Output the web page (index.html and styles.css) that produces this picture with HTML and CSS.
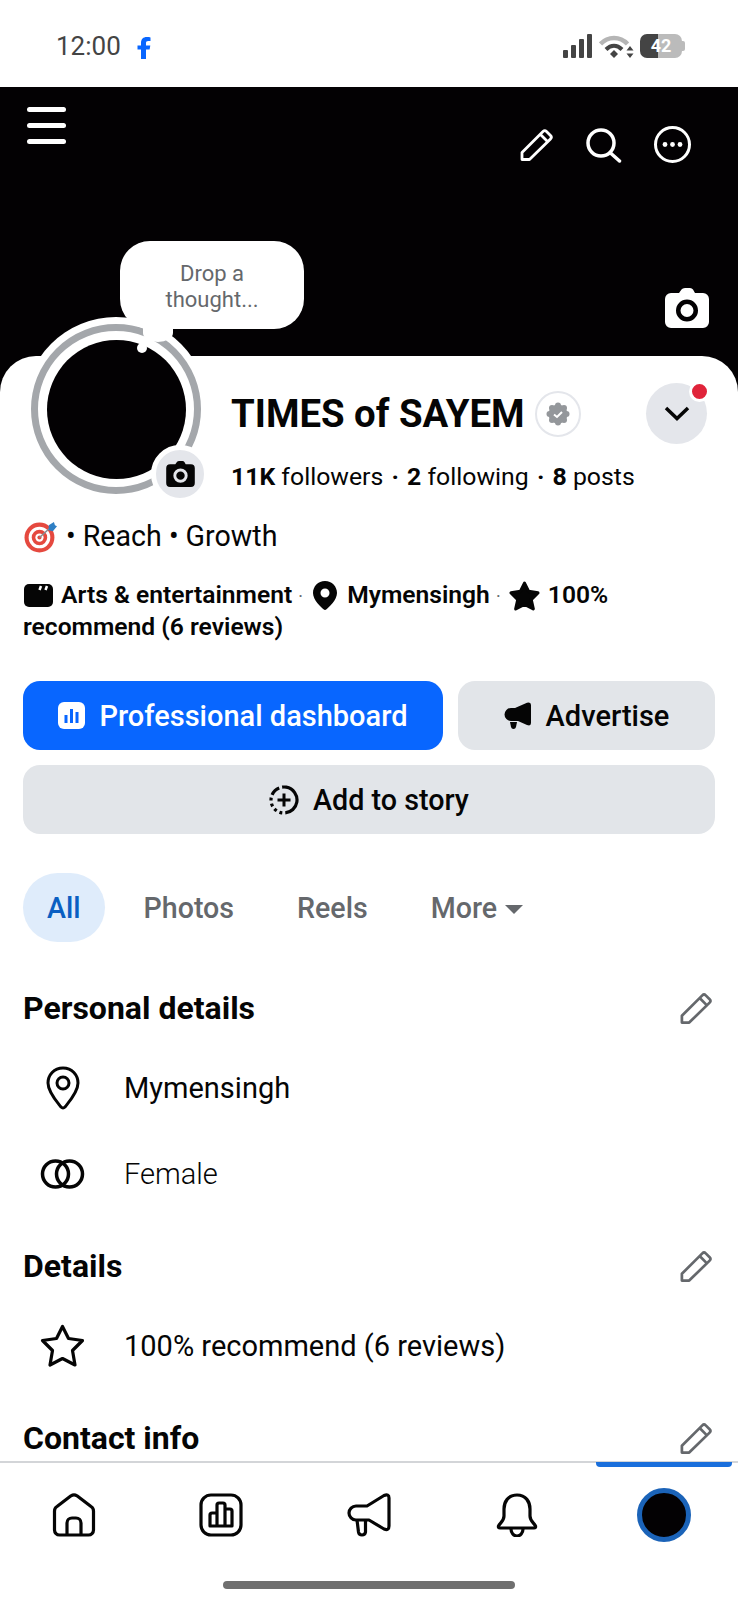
FILE: index.html
```html
<!DOCTYPE html>
<html lang="en">
    <head>
        <meta charset="UTF-8">
        <meta name="viewport" content="width=device-width, initial-scale=1.0">
        <title>TIMES of SAYEM</title>
        <link rel="stylesheet" href="styles.css">
    </head>
    <body>

    <svg class="defs" width="0" height="0">
        <symbol id="pencil" viewBox="0 0 37 37">
            <path d="M4 33.5V26.5L25 5.500a2.500 2.500 0 0 1 3.500 0l4 4a2.500 2.500 0 0 1 0 3.500L11.500 33.500zM22.500 8.500l6.500 6.500" fill="none" stroke="currentColor" stroke-width="2.800" stroke-linejoin="round"/>
        </symbol>
        <symbol id="camera" viewBox="0 0 44 40">
            <path fill="currentColor" fill-rule="evenodd" d="M14 5L16.500 1.500Q17.500 0 20 0H25Q27 0 28 1.500L30 5H38a6 6 0 0 1 6 6V34a6 6 0 0 1-6 6H6a6 6 0 0 1-6-6V11a6 6 0 0 1 6-6zM22 11.500a11 11 0 1 0 0 22a11 11 0 1 0 0-22zM22 16a6.500 6.500 0 1 1 0 13a6.500 6.500 0 1 1 0-13z"/>
        </symbol>
    </svg>

    <div class="page">
        <div class="status">
            <span class="clock">12:00</span>
            <svg class="status-fb" viewBox="0 0 14 22"><path fill="#0866ff" d="M4 22V12.500H0.500V8.500H4V6C4 2 6.300 0 9.700 0C11.200 0 12.800 0.200 13.500 0.400V4H11.300C9.500 4 9 4.900 9 6.200V8.500H13.300L12.600 12.500H9V22z"/></svg>
            <div class="status-right">
                <svg class="signal" viewBox="0 0 30 24">
                    <rect x="0" y="16" width="5" height="8" rx="1" fill="#444"/>
                    <rect x="8" y="11" width="5" height="13" rx="1" fill="#444"/>
                    <rect x="16" y="5" width="5" height="19" rx="1" fill="#444"/>
                    <rect x="24" y="0" width="5" height="24" rx="1" fill="#444"/>
                </svg>
                <svg class="wifi" viewBox="0 0 35 24">
                    <path d="M1.500 10C9 2 21 2 28.500 10" fill="none" stroke="#b5b5b5" stroke-width="4.500"/>
                    <path d="M7 15.500C12 10.500 18 10.500 23 15.500" fill="none" stroke="#444" stroke-width="4"/>
                    <path d="M11 20L15 16L19 20L15 24z" fill="#444"/>
                    <path d="M31 12l3.500 4.500h-7zM31 24l3.500-4.500h-7z" fill="#444"/>
                </svg>
                <div class="battery"><span>42</span></div>
            </div>
        </div>

        <div class="cover">
            <div class="cover-top">
                <div class="burger"><span></span><span></span><span></span></div>
                <div class="cover-actions">
                    <svg class="icon-37"><use href="#pencil"/></svg>
                    <svg class="icon-37" viewBox="0 0 37 37"><circle cx="15" cy="17" r="13" fill="none" stroke="currentColor" stroke-width="3.500"/><path d="M24.500 27L33.500 35" stroke="currentColor" stroke-width="3.500" stroke-linecap="round"/></svg>
                    <svg class="icon-37" viewBox="0 0 37 37"><circle cx="18.500" cy="18.500" r="17" fill="none" stroke="currentColor" stroke-width="3"/><circle cx="11" cy="18.500" r="2.400" fill="currentColor"/><circle cx="18.500" cy="18.500" r="2.400" fill="currentColor"/><circle cx="26" cy="18.500" r="2.400" fill="currentColor"/></svg>
                </div>
            </div>
            <svg class="cover-camera"><use href="#camera"/></svg>
        </div>

        <div class="card">
            <div class="bubble">Drop a<br>thought...</div>
            <div class="avatar">
                <div class="avatar-ring"><div class="avatar-photo"></div></div>
                <div class="avatar-badge"><svg class="badge-camera"><use href="#camera"/></svg></div>
            </div>

            <div class="head">
                <div class="head-top">
                    <h1 class="name">TIMES of SAYEM</h1>
                    <div class="verified">
                        <svg viewBox="0 0 24 24" width="24" height="24">
                            <g fill="#94979b">
                                <circle cx="12" cy="12" r="9.500"/>
                                <circle cx="12" cy="3.500" r="3"/><circle cx="18" cy="6" r="3"/><circle cx="20.500" cy="12" r="3"/><circle cx="18" cy="18" r="3"/>
                                <circle cx="12" cy="20.500" r="3"/><circle cx="6" cy="18" r="3"/><circle cx="3.500" cy="12" r="3"/><circle cx="6" cy="6" r="3"/>
                            </g>
                            <path d="M8 12.500l3 2.500l5-5" fill="none" stroke="#fff" stroke-width="2"/>
                        </svg>
                    </div>
                    <button class="drop-btn">
                        <svg viewBox="0 0 26 15" width="26" height="15"><path d="M2 2L13 12.500L24 2" fill="none" stroke="#050505" stroke-width="3.500"/></svg>
                        <span class="red-dot"></span>
                    </button>
                </div>
                <p class="counts"><b>11K</b> followers <b class="sep">·</b> <b>2</b> following <b class="sep">·</b> <b>8</b> posts</p>
            </div>

            <p class="bio">
                <svg class="target" viewBox="0 0 32 32">
                    <circle cx="15" cy="17" r="14.500" fill="#e5493f"/>
                    <circle cx="15" cy="17" r="10.500" fill="#fff"/>
                    <circle cx="15" cy="17" r="7.500" fill="#e5493f"/>
                    <circle cx="15" cy="17" r="4" fill="#fff"/>
                    <circle cx="15" cy="17" r="2" fill="#e5493f"/>
                    <path d="M15 17L26 7" stroke="#8a8d91" stroke-width="1.500"/>
                    <path d="M24 5l5-3l1 3l2 1l-4 5l-4-1z" fill="#2f7fc4"/>
                </svg>
                • Reach • Growth
            </p>

            <p class="meta">
                <svg class="meta-clip" viewBox="0 0 29 23"><rect width="29" height="23" rx="5" fill="#050505"/><path d="M17 2L15.500 6M23 2L21.500 6" stroke="#fff" stroke-width="2.500"/></svg>
                Arts &amp; entertainment <span class="dot">·</span>
                <svg class="meta-pin" viewBox="0 0 24 29"><path fill="#050505" fill-rule="evenodd" d="M12 0C5 0 0 5.500 0 12C0 19 8 26 10.500 28.300Q12 29.500 13.500 28.300C16 26 24 19 24 12C24 5.500 19 0 12 0zM12 7.500a4.500 4.500 0 1 1 0 9a4.500 4.500 0 1 1 0-9z"/></svg>
                Mymensingh <span class="dot">·</span>
                <svg class="meta-star" viewBox="0 0 30 29"><path fill="#050505" stroke="#050505" stroke-width="3" stroke-linejoin="round" d="M15 2L19 10L28 11.500L21.500 18L23.500 27L15 22.500L6.500 27L8.500 18L2 11.500L11 10z"/></svg>
                100%<br>recommend (6 reviews)
            </p>

            <div class="actions">
                <button class="btn btn-blue">
                    <svg class="btn-icon-dash" viewBox="0 0 27 27"><rect width="27" height="27" rx="6" fill="#fff"/><rect x="6.500" y="13" width="3" height="8" fill="#0866ff"/><rect x="12" y="7" width="3" height="14" fill="#0866ff"/><rect x="17.500" y="10" width="3" height="11" fill="#0866ff"/></svg>
                    Professional dashboard
                </button>
                <button class="btn btn-grey btn-side">
                    <svg class="btn-icon-horn" viewBox="0 0 28 27"><path fill="#050505" d="M7 6H11L23 0.800Q27 -0.500 27 3V21Q27 24.500 23 23L14 19H7A6.500 6.500 0 0 1 7 6zM6 20H13L12 25Q11.500 27 9.500 27T7 25z"/></svg>
                    Advertise
                </button>
                <button class="btn btn-grey btn-wide">
                    <svg class="btn-icon-add" viewBox="0 0 30 30"><circle cx="15" cy="15" r="13" fill="none" stroke="#050505" stroke-width="3.200" stroke-dasharray="37 3 3 3 3 3 3 3 3 3 10 3" transform="rotate(-80 15 15)"/><path d="M15 8.500V21.500M8.500 15H21.500" stroke="#050505" stroke-width="3"/></svg>
                    Add to story
                </button>
            </div>

            <div class="tabs">
                <div class="tab tab-on">All</div>
                <div class="tab">Photos</div>
                <div class="tab">Reels</div>
                <div class="tab">More<span class="caret"></span></div>
            </div>

            <div class="section">
                <div class="section-head">
                    <h2>Personal details</h2>
                    <svg class="edit"><use href="#pencil"/></svg>
                </div>
                <div class="rows">
                    <div class="row">
                        <div class="row-icon"><svg width="34" height="44" viewBox="0 0 34 44"><path d="M17 2C8 2 2 9 2 17C2 26 11 36 15 41Q17 43 19 41C23 36 32 26 32 17C32 9 26 2 17 2z" fill="none" stroke="#050505" stroke-width="3"/><circle cx="17" cy="17" r="6" fill="none" stroke="#050505" stroke-width="3"/></svg></div>
                        <span>Mymensingh</span>
                    </div>
                    <div class="row row-light">
                        <div class="row-icon"><svg width="45" height="30" viewBox="0 0 45 30"><circle cx="15.500" cy="15" r="13" fill="none" stroke="#050505" stroke-width="3.500"/><circle cx="29.500" cy="15" r="13" fill="none" stroke="#050505" stroke-width="3.500"/></svg></div>
                        <span>Female</span>
                    </div>
                </div>
            </div>

            <div class="section">
                <div class="section-head">
                    <h2>Details</h2>
                    <svg class="edit"><use href="#pencil"/></svg>
                </div>
                <div class="rows">
                    <div class="row">
                        <div class="row-icon"><svg width="45" height="44" viewBox="0 0 45 44"><path d="M22.500 2.500L28.500 14.500L42.500 16.500L32.500 26.500L35 41L22.500 34.500L10 41L12.500 26.500L2.500 16.500L16.500 14.500z" fill="none" stroke="#050505" stroke-width="3.200" stroke-linejoin="round"/></svg></div>
                        <span>100% recommend (6 reviews)</span>
                    </div>
                </div>
            </div>

            <div class="section">
                <div class="section-head">
                    <h2>Contact info</h2>
                    <svg class="edit"><use href="#pencil"/></svg>
                </div>
            </div>
        </div>

        <div class="nav">
            <div class="nav-tabs">
                <div class="nav-tab"><svg width="44" height="44" viewBox="0 0 44 44"><g fill="none" stroke="#050505" stroke-width="3.200" stroke-linejoin="round"><path d="M2.500 18Q2.500 15 5 13.500L19 2.800Q22 1 25 2.800L39 13.500Q41.500 15 41.500 18V37a5 5 0 0 1-5 5H7.500a5 5 0 0 1-5-5z"/><path d="M15 42V30a5 5 0 0 1 5-5h4a5 5 0 0 1 5 5V42"/></g></svg></div>
                <div class="nav-tab"><svg width="44" height="44" viewBox="0 0 44 44"><g fill="none" stroke="#050505" stroke-width="3.200" stroke-linejoin="round"><rect x="2" y="2" width="40" height="40" rx="10"/><path d="M11 33V22a2 2 0 0 1 2-2h5V12a2 2 0 0 1 2-2h4a2 2 0 0 1 2 2V16h5a2 2 0 0 1 2 2V33zM18 20V33M26 16V33"/></g></svg></div>
                <div class="nav-tab"><svg width="46" height="44" viewBox="0 0 46 44"><g fill="none" stroke="#050505" stroke-width="3.200" stroke-linejoin="round"><path d="M10 13H21L38 2.500Q43 0.500 43 5V33Q43 38 38 36L23 27H10A7 7 0 0 1 10 13z"/><path d="M11 27l1.500 12q0.500 3 3.500 3t3.500-3V28"/></g></svg></div>
                <div class="nav-tab"><svg width="42" height="44" viewBox="0 0 42 44"><g fill="none" stroke="#050505" stroke-width="3.200" stroke-linejoin="round"><path d="M21 2C12 2 8 9 8 16V23C8 28 4 30 2.500 33Q2 35 4 35H38Q40 35 39.500 33C38 30 34 28 34 23V16C34 9 30 2 21 2z"/><path d="M15 36a6 7 0 0 0 12 0"/></g></svg></div>
                <div class="nav-tab nav-tab-on"><div class="nav-avatar"></div></div>
            </div>
            <div class="home-bar"></div>
        </div>
    </div>

    </body>
</html>
```

FILE: styles.css
```css
* {
    box-sizing: border-box;
    margin: 0;
    padding: 0;
}
body {
    background-color: #fff;
    color: #050505;
    font-family: Roboto, "Liberation Sans", sans-serif;
}
.defs {
    position: absolute;
}
.page {
    display: flex;
    flex-direction: column;
    width: 738px;
    height: 1600px;
    overflow: hidden;
}

/* status bar */
.status {
    display: flex;
    align-items: center;
    flex-shrink: 0;
    height: 87px;
    padding: 10px 53px 6px 56px;
}
.clock {
    font-size: 26px;
    color: #444;
}
.status-fb {
    width: 14px;
    height: 22px;
    margin-left: 16px;
    margin-top: 4px;
}
.status-right {
    display: flex;
    align-items: center;
    gap: 6px;
    margin-left: auto;
}
.signal {
    width: 30px;
    height: 24px;
}
.wifi {
    width: 35px;
    height: 24px;
}
.battery {
    position: relative;
    width: 42px;
    height: 24px;
    margin-right: 3px;
    border-radius: 7px;
    background: linear-gradient(90deg, #444 44%, #bbb 44%);
    color: #fff;
    font-size: 18px;
    font-weight: 700;
    line-height: 24px;
    text-align: center;
}
.battery::after {
    content: "";
    position: absolute;
    top: 7px;
    right: -3px;
    width: 3px;
    height: 10px;
    border-radius: 0 2px 2px 0;
    background-color: #bbb;
}

/* cover */
.cover {
    display: flex;
    flex-direction: column;
    flex-shrink: 0;
    height: 309px;
    padding: 20px 27px 0;
    background-color: #030103;
    color: #fff;
}
.cover-top {
    display: flex;
    justify-content: space-between;
}
.burger {
    display: flex;
    flex-direction: column;
    gap: 11px;
}
.burger span {
    width: 39px;
    height: 5px;
    border-radius: 3px;
    background-color: #fff;
}
.cover-actions {
    display: flex;
    gap: 31px;
    margin-top: 19px;
    margin-right: 20px;
}
.icon-37 {
    width: 37px;
    height: 37px;
}
.cover-camera {
    width: 44px;
    height: 40px;
    margin-top: 125px;
    margin-left: auto;
    margin-right: 2px;
}

/* main card */
.card {
    position: relative;
    flex: 1;
    min-height: 0;
    margin-top: -40px;
    padding: 0 23px;
    border-radius: 36px 36px 0 0;
    background-color: #fff;
}
.bubble {
    position: absolute;
    z-index: 3;
    top: -115px;
    left: 120px;
    width: 184px;
    height: 88px;
    padding-top: 20px;
    border-radius: 30px;
    background-color: #fff;
    color: #65686c;
    font-size: 22px;
    line-height: 26px;
    text-align: center;
}
.bubble::before {
    content: "";
    position: absolute;
    left: 23px;
    bottom: -13px;
    width: 30px;
    height: 18px;
    border-radius: 0 0 50% 50%;
    background-color: #fff;
}
.bubble::after {
    content: "";
    position: absolute;
    left: 17px;
    top: 102px;
    width: 10px;
    height: 10px;
    border-radius: 50%;
    background-color: #fff;
}
.avatar {
    position: absolute;
    z-index: 2;
    top: -39px;
    left: 24px;
    display: flex;
    align-items: center;
    justify-content: center;
    width: 184px;
    height: 184px;
    border-radius: 50%;
    background-color: #fff;
}
.avatar-ring {
    display: flex;
    align-items: center;
    justify-content: center;
    width: 170px;
    height: 170px;
    border: 7px solid #a4a7ab;
    border-radius: 50%;
}
.avatar-photo {
    width: 139px;
    height: 139px;
    border-radius: 50%;
    background-color: #030103;
}
.avatar-badge {
    position: absolute;
    left: 127px;
    top: 128px;
    display: flex;
    align-items: center;
    justify-content: center;
    width: 58px;
    height: 58px;
    border: 5px solid #fff;
    border-radius: 50%;
    background-color: #e4e6eb;
    color: #050505;
}
.badge-camera {
    width: 29px;
    height: 26px;
}

/* name block */
.head {
    padding-top: 27px;
    padding-left: 208px;
}
.head-top {
    display: flex;
    align-items: center;
    height: 61px;
}
.name {
    font-size: 38.3px;
    font-weight: 700;
    line-height: 46px;
    white-space: nowrap;
}
.verified {
    display: flex;
    align-items: center;
    justify-content: center;
    width: 46px;
    height: 46px;
    margin-left: 10px;
    border: 2px solid #e4e6eb;
    border-radius: 50%;
}
.drop-btn {
    position: relative;
    display: flex;
    align-items: center;
    justify-content: center;
    width: 61px;
    height: 61px;
    margin-left: auto;
    margin-right: 8px;
    border-width: 0;
    border-radius: 50%;
    background-color: #e4e6eb;
}
.red-dot {
    position: absolute;
    top: -2px;
    right: -3px;
    width: 21px;
    height: 21px;
    border: 3px solid #fff;
    border-radius: 50%;
    background-color: #e0243a;
}
.counts {
    margin-top: 18px;
    font-size: 24.8px;
    line-height: 30px;
    white-space: nowrap;
}
.sep {
    margin: 0 2px;
}
.bio {
    display: flex;
    align-items: center;
    gap: 9px;
    height: 36px;
    margin-top: 26px;
    font-size: 28.6px;
}
.target {
    width: 33px;
    height: 33px;
    margin-left: 1px;
}
.meta {
    margin-top: 26px;
    font-size: 24.6px;
    font-weight: 600;
    line-height: 30px;
}
.meta svg {
    margin-top: -6px;
    margin-bottom: -4px;
    vertical-align: middle;
}
.meta-clip {
    width: 29px;
    height: 23px;
    margin-left: 1px;
    margin-right: 2px;
}
.meta-pin {
    width: 24px;
    height: 29px;
    margin-left: 4px;
    margin-right: 4px;
}
.meta-star {
    width: 31px;
    height: 30px;
    margin-left: 2px;
    margin-right: 2px;
}
.dot {
    color: #65686c;
    font-weight: 400;
    font-size: 18px;
}

/* buttons */
.actions {
    display: grid;
    grid-template-columns: 420px 1fr;
    gap: 15px;
    margin-top: 39px;
}
.btn {
    display: flex;
    align-items: center;
    justify-content: center;
    gap: 14px;
    height: 69px;
    border-width: 0;
    border-radius: 17px;
    font-family: Roboto, "Liberation Sans", sans-serif;
    font-size: 29px;
    font-weight: 500;
}
.btn-blue {
    background-color: #0866ff;
    color: #fff;
}
.btn-grey {
    background-color: #e2e5e9;
    color: #050505;
}
.btn-wide {
    grid-column: 1 / 3;
    font-size: 28.7px;
}
.btn-icon-dash {
    width: 27px;
    height: 27px;
}
.btn-icon-horn {
    width: 28px;
    height: 27px;
}
.btn-icon-add {
    width: 30px;
    height: 30px;
}

/* tabs */
.tabs {
    display: flex;
    gap: 15px;
    margin-top: 39px;
}
.tab {
    display: flex;
    align-items: center;
    height: 69px;
    padding: 0 24px;
    border-radius: 35px;
    color: #65686c;
    font-size: 28.6px;
    font-weight: 500;
}
.tab-on {
    background-color: #dfecfb;
    color: #0a5fc2;
}
.caret {
    width: 0;
    height: 0;
    margin-left: 8px;
    margin-top: 3px;
    border-top: 9px solid #65686c;
    border-left: 9px solid transparent;
    border-right: 9px solid transparent;
}

/* detail sections */
.section {
    margin-top: 29px;
}
.tabs + .section {
    margin-top: 46px;
}
.section-head {
    display: flex;
    align-items: center;
    justify-content: space-between;
    height: 40px;
}
.section-head h2 {
    font-size: 32px;
    font-weight: 700;
}
.edit {
    width: 36px;
    height: 36px;
    margin-right: 1px;
    color: #65686c;
}
.rows {
    margin-top: 17px;
}
.row {
    display: flex;
    align-items: center;
    height: 86px;
    font-size: 29px;
    font-weight: 450;
}
.row-light {
    font-weight: 300;
}
.row-icon {
    display: flex;
    justify-content: center;
    width: 79px;
    margin-right: 22px;
}

/* bottom nav */
.nav {
    position: relative;
    z-index: 4;
    flex-shrink: 0;
    height: 139px;
    border-top: 2px solid #d3d5d8;
    background-color: #fff;
}
.nav-tabs {
    display: grid;
    grid-template-columns: repeat(5, 1fr);
    align-items: center;
    height: 54px;
    margin-top: 25px;
}
.nav-tab {
    display: flex;
    justify-content: center;
}
.nav-tab-on::before {
    content: "";
    position: absolute;
    top: -1px;
    left: 596px;
    width: 136px;
    height: 5px;
    border-radius: 0 0 4px 4px;
    background-color: #1a6fdc;
}
.nav-avatar {
    width: 54px;
    height: 54px;
    border: 5px solid #1b63b8;
    border-radius: 50%;
    background-color: #030103;
}
.home-bar {
    width: 292px;
    height: 8px;
    margin: 39px auto 0;
    border-radius: 4px;
    background-color: #6f6f6f;
}
```
